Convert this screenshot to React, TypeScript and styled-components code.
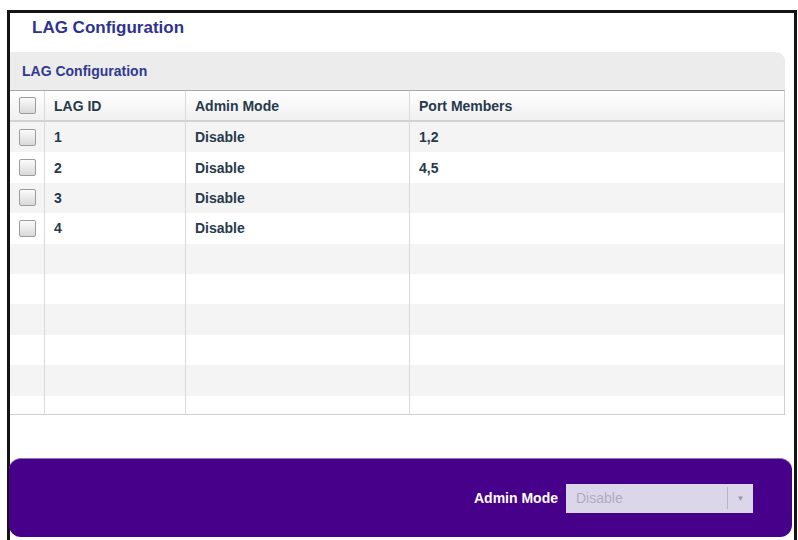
import React from "react";
import styled, { createGlobalStyle } from "styled-components";

const GlobalStyle = createGlobalStyle`
  html, body {
    margin: 0;
    padding: 0;
    background: #ffffff;
    overflow: hidden;
  }
  body {
    font-family: "Liberation Sans", Arial, sans-serif;
  }
`;

const Frame = styled.div`
  margin: 10px 0 0 7px;
  width: 790px;
  height: 533px;
  box-sizing: border-box;
  border: 3px solid #141414;
  display: flex;
  flex-direction: column;
`;

const Title = styled.h1`
  margin: 0;
  height: 39px;
  box-sizing: border-box;
  padding: 5px 0 0 22px;
  font-size: 17px;
  line-height: 20px;
  font-weight: bold;
  color: #2e3290;
`;

const Panel = styled.section`
  width: 775px;
  display: flex;
  flex-direction: column;
`;

const PanelHeader = styled.div`
  height: 38px;
  box-sizing: border-box;
  padding: 11px 0 0 12px;
  background: #ececec;
  border-radius: 0 9px 0 0;
  font-size: 14px;
  line-height: 17px;
  font-weight: bold;
  color: #2f3a8e;
`;

const Table = styled.div`
  width: 774px;
  border-top: 1px solid #a8a8a8;
  border-right: 1px solid #cfcfcf;
  border-bottom: 1px solid #cfcfcf;
`;

const Row = styled.div<{ $head?: boolean; $striped?: boolean }>`
  display: grid;
  grid-template-columns: 34px 141px 224px 1fr;
  height: ${(p) => (p.$head ? "29px" : "30.4px")};
  background: ${(p) =>
    p.$head
      ? "linear-gradient(#ffffff, #f0f0f0)"
      : p.$striped
      ? "#f4f4f4"
      : "#ffffff"};
  border-bottom: ${(p) => (p.$head ? "2px solid #d2d2d2" : "none")};
`;

const Body = styled.div`
  height: 292px;
  overflow: hidden;
`;

const Cell = styled.div<{ $first?: boolean }>`
  display: flex;
  align-items: center;
  justify-content: ${(p) => (p.$first ? "center" : "flex-start")};
  padding-left: ${(p) => (p.$first ? "0" : "9px")};
  border-left: ${(p) => (p.$first ? "none" : "1px solid #d9d9d9")};
  font-size: 14px;
  font-weight: bold;
  color: #263a4c;
  white-space: nowrap;
`;

const Check = styled.span`
  width: 17px;
  height: 17px;
  box-sizing: border-box;
  border: 1px solid #9c9c9c;
  border-radius: 2px;
  background: linear-gradient(#fbfbfb, #d9d9d9);
`;

const Spacer = styled.div`
  flex: 1;
`;

const Footer = styled.footer`
  margin: 0 2px 3px -1px;
  height: 79px;
  box-sizing: border-box;
  background: #46008a;
  border-top: 1px solid #8f74bd;
  border-radius: 12px;
  display: flex;
  align-items: center;
  justify-content: flex-end;
  gap: 8px;
  padding-right: 39px;
`;

const Label = styled.span`
  font-size: 14px;
  font-weight: bold;
  color: #ffffff;
`;

const Select = styled.div`
  width: 187px;
  height: 29px;
  box-sizing: border-box;
  background: #dcd6ea;
  display: flex;
  align-items: center;
  padding-left: 10px;
  font-size: 14px;
  color: #b1abc2;
`;

const SelectText = styled.span`
  flex: 1;
`;

const Arrow = styled.span`
  width: 25px;
  height: 22px;
  border-left: 1px solid #b9b3c8;
  display: flex;
  align-items: center;
  justify-content: center;
  font-size: 8px;
  color: #9b96a8;
`;

const lags = [
  { id: "1", mode: "Disable", ports: "1,2" },
  { id: "2", mode: "Disable", ports: "4,5" },
  { id: "3", mode: "Disable", ports: "" },
  { id: "4", mode: "Disable", ports: "" },
];

const App: React.FC = () => {
  //* 빈 줄까지 채워서 10줄
  const rows = Array.from({ length: 10 }, (_, i) => lags[i]);

  return (
    <>
      <GlobalStyle />
      <Frame>
        <Title>LAG Configuration</Title>
        <Panel>
          <PanelHeader>LAG Configuration</PanelHeader>
          <Table>
            <Row $head>
              <Cell $first>
                <Check />
              </Cell>
              <Cell>LAG ID</Cell>
              <Cell>Admin Mode</Cell>
              <Cell>Port Members</Cell>
            </Row>
            <Body>
              {rows.map((lag, index) => (
                <Row key={index} $striped={index % 2 === 0}>
                  <Cell $first>{lag && <Check />}</Cell>
                  <Cell>{lag?.id}</Cell>
                  <Cell>{lag?.mode}</Cell>
                  <Cell>{lag?.ports}</Cell>
                </Row>
              ))}
            </Body>
          </Table>
        </Panel>
        <Spacer />
        <Footer>
          <Label>Admin Mode</Label>
          <Select>
            <SelectText>Disable</SelectText>
            <Arrow>▼</Arrow>
          </Select>
        </Footer>
      </Frame>
    </>
  );
};

export default App;
